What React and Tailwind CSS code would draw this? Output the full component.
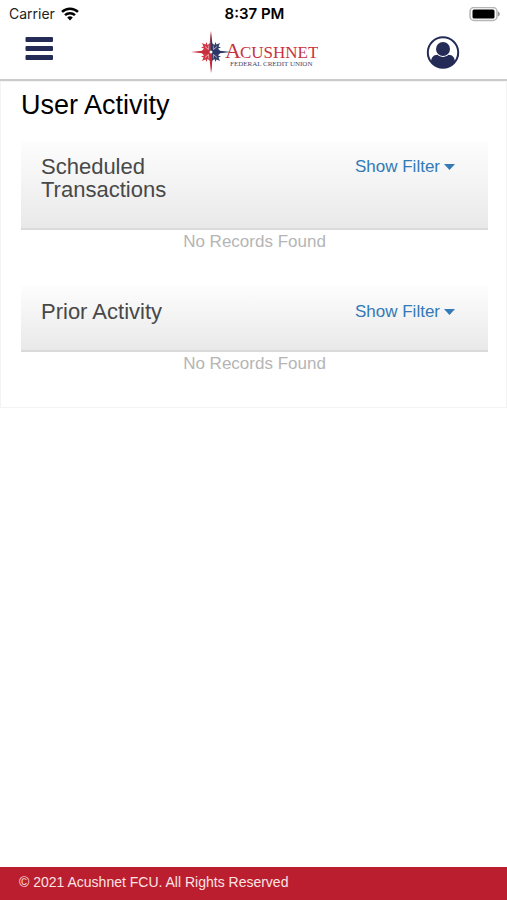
import { useState } from "react";

const sections = [
  { id: "scheduled", title: "Scheduled Transactions" },
  { id: "prior", title: "Prior Activity" },
];

function StatusBar() {
  return (
    <div className="grid grid-cols-3 items-center h-7 pl-[9px] pr-[7px] font-[Inter,sans-serif] text-sm text-[#222]">
      <div className="flex items-center gap-[6px]">
        <span>Carrier</span>
        <svg width="18" height="14" viewBox="0 0 18 14" fill="none" stroke="#000" strokeWidth="2.5">
          <path d="M1 4.900a11.500 11.500 0 0 1 16 0" />
          <path d="M4 8.200a7.200 7.200 0 0 1 10 0" />
          <path d="M9 13.400 6.200 10.600a4 4 0 0 1 5.600 0z" fill="#000" stroke="none" />
        </svg>
      </div>
      <span className="text-center text-[15px] font-semibold text-black">8:37 PM</span>
      <svg className="justify-self-end" width="31" height="15" viewBox="0 0 31 15">
        <rect x="1" y="0.500" width="27" height="13" rx="4" fill="#fff" stroke="#b5b5b5" strokeWidth="1.500" />
        <rect x="3.500" y="2.500" width="22" height="9" rx="1.500" fill="#000" />
        <path d="M29 4.500v5c1.200-.4 1.800-1.400 1.800-2.500s-.6-2.100-1.800-2.500z" fill="#999" />
      </svg>
    </div>
  );
}

function Logo() {
  return (
    <svg width="129" height="44" viewBox="0 0 129 44" role="img" aria-label="Acushnet Federal Credit Union">
      {/* compass rose, red west half and navy east half */}
      <path d="M22 12.500 18.500 15 17.500 12 16.500 14.500 13 13 14.500 16.500 12 17.500 15 18.500 12 22 15 25.500 12 26.500 14.500 27.500 13 31 16.500 29.500 17.500 32 18.500 29 22 31.500z" fill="#d03a45" />
      <path d="M22 12.500 25.500 15 26.500 12 27.500 14.500 31 13 29.500 16.500 32 17.500 29 18.500 32 22 29 25.500 32 26.500 29.500 27.500 31 31 27.500 29.500 26.500 32 25.500 29 22 31.500z" fill="#343e6d" />
      <path d="M20 15.500 19.500 19.500 16 16.500M16 27.500 19.500 24.500 20 28.500" fill="none" stroke="#f6d5d7" strokeWidth="0.7" />
      <path d="M24 15.500 24.500 19.500 28 16.500M28 27.500 24.500 24.500 24 28.500" fill="none" stroke="#d3d6e5" strokeWidth="0.7" />
      <path d="M22 1 20 20 2 22 20 24 22 43z" fill="#c52f3b" />
      <path d="M22 1 24 20 42 22 24 24 22 43z" fill="#2b3566" />
      <path d="M22 1 20.500 19 22 22zM22 43 23.500 25 22 22z" fill="#7d4560" />
      <circle cx="22" cy="22" r="1.500" fill="#fff" />
      <g fontFamily="'Liberation Serif', serif">
        <text x="36" y="28" fontSize="22" fill="#c8323c">A</text>
        <text x="51" y="28" fontSize="17" fill="#c8323c">CUSHNET</text>
        <text x="41" y="36" fontSize="7" fill="#3f486f">FEDERAL CREDIT UNION</text>
      </g>
    </svg>
  );
}

function Header() {
  return (
    <header className="grid grid-cols-3 items-center h-[53px] pb-1 border-b-2 border-[#cbcbcd]">
      <button type="button" aria-label="Menu" className="justify-self-start ml-[25px] mb-[5px]">
        <svg width="28" height="24" viewBox="0 0 28 24" fill="#232b56">
          <rect x="0.5" y="0" width="27.5" height="5" rx="1" />
          <rect x="0.5" y="9" width="27.5" height="5" rx="1" />
          <rect x="0.5" y="18" width="27.5" height="5" rx="1" />
        </svg>
      </button>
      <a href="#home" className="justify-self-center">
        <Logo />
      </a>
      <button type="button" aria-label="Profile" className="justify-self-end mr-[47px]">
        <svg width="34" height="34" viewBox="0 0 34 34">
          <circle cx="17" cy="17.500" r="15.200" fill="#fff" stroke="#232b56" strokeWidth="2" />
          <circle cx="17" cy="14" r="7" fill="#232b56" />
          <path d="M5 27c.3-4.800 2.500-7 6.500-7.200 3 2.800 8 2.800 11 0 4 .2 6.200 2.400 6.500 7.200A15.200 15.200 0 0 1 17 32.700 15.200 15.200 0 0 1 5 27z" fill="#232b56" />
        </svg>
      </button>
    </header>
  );
}

function ActivitySection({ title, open, onToggle }) {
  return (
    <section>
      <div className="flex justify-between items-start pt-[14px] pb-[27px] pl-5 pr-[33px] border-b-2 border-[#dadada] bg-linear-to-b from-[#fdfdfd] to-[#e9e9e9]">
        <h2 className="w-2/5 max-w-36 text-[22px] leading-[23px] text-[#484848]">{title}</h2>
        <button
          type="button"
          aria-expanded={open}
          onClick={onToggle}
          className="flex items-center gap-1 text-[17px] leading-[23px] text-[#337ab7]"
        >
          Show Filter
          <svg width="11" height="6" viewBox="0 0 11 6" fill="currentColor">
            <path d="M0 0h11L5.500 6z" />
          </svg>
        </button>
      </div>
      <p className="text-center text-[17px] leading-6 text-[#b5b5b5]">No Records Found</p>
    </section>
  );
}

export default function App() {
  const [openFilter, setOpenFilter] = useState(null);

  const handleToggle = (id) => {
    setOpenFilter((prev) => (prev === id ? null : id));
  };

  return (
    <div className="flex flex-col min-h-screen bg-white font-['Liberation_Sans',Arial,sans-serif]">
      <StatusBar />
      <Header />
      <main className="pt-2 pb-[31px] pl-5 pr-[18px] border border-[#f3f3f3]">
        <h1 className="mb-[21px] text-[27px] leading-[30px] text-black">User Activity</h1>
        <div className="flex flex-col gap-8">
          {sections.map((section) => (
            <ActivitySection
              key={section.id}
              title={section.title}
              open={openFilter === section.id}
              onToggle={() => handleToggle(section.id)}
            />
          ))}
        </div>
      </main>
      <footer className="mt-auto pl-[19px] pb-[3px] bg-[#bb1e2e] text-sm leading-[30px] text-[#fbe3e3]">
        © 2021 Acushnet FCU. All Rights Reserved
      </footer>
    </div>
  );
}
